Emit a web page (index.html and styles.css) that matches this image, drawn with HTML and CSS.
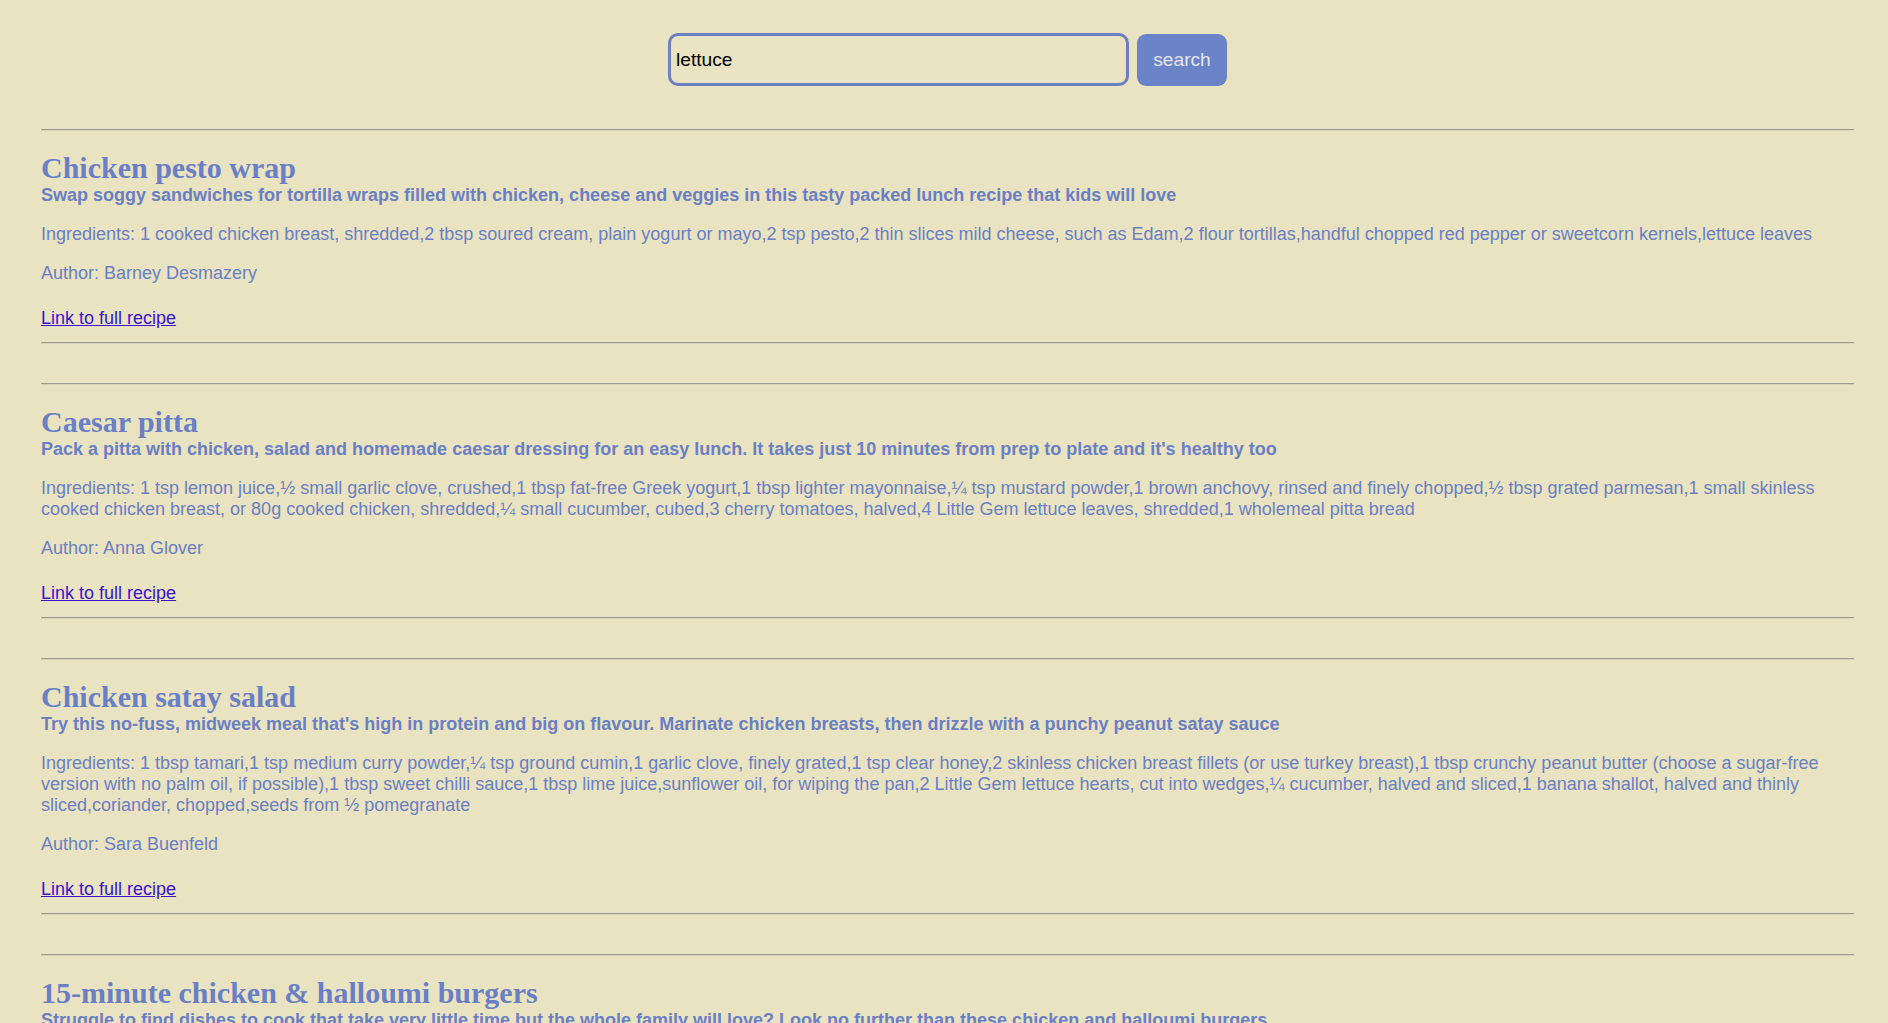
FILE: index.html
```html
<!DOCTYPE html>
<html lang="en">
<head>
<meta charset="utf-8">
<title>Recipe search</title>
<link rel="stylesheet" href="styles.css">
</head>
<body>
<main class="page">
  <form class="search">
    <input class="search-input" type="text" value="lettuce">
    <button class="search-btn" type="button">search</button>
  </form>

  <article class="recipe">
    <hr class="rule">
    <h1 class="recipe-title">Chicken pesto wrap</h1>
    <h3 class="recipe-desc">Swap soggy sandwiches for tortilla wraps filled with chicken, cheese and veggies in this tasty packed lunch recipe that kids will love</h3>
    <p class="recipe-text">Ingredients: 1 cooked chicken breast, shredded,2 tbsp soured cream, plain yogurt or mayo,2 tsp pesto,2 thin slices mild cheese, such as Edam,2 flour tortillas,handful chopped red pepper or sweetcorn kernels,lettuce leaves</p>
    <p class="recipe-text">Author: Barney Desmazery</p>
    <div class="recipe-link-row"><a class="recipe-link" href="#">Link to full recipe</a></div>
    <hr class="rule">
  </article>

  <article class="recipe">
    <hr class="rule">
    <h1 class="recipe-title">Caesar pitta</h1>
    <h3 class="recipe-desc">Pack a pitta with chicken, salad and homemade caesar dressing for an easy lunch. It takes just 10 minutes from prep to plate and it's healthy too</h3>
    <p class="recipe-text">Ingredients: 1 tsp lemon juice,½ small garlic clove, crushed,1 tbsp fat-free Greek yogurt,1 tbsp lighter mayonnaise,¼ tsp mustard powder,1 brown anchovy, rinsed and finely chopped,½ tbsp grated parmesan,1 small skinless cooked chicken breast, or 80g cooked chicken, shredded,¼ small cucumber, cubed,3 cherry tomatoes, halved,4 Little Gem lettuce leaves, shredded,1 wholemeal pitta bread</p>
    <p class="recipe-text">Author: Anna Glover</p>
    <div class="recipe-link-row"><a class="recipe-link" href="#">Link to full recipe</a></div>
    <hr class="rule">
  </article>

  <article class="recipe">
    <hr class="rule">
    <h1 class="recipe-title">Chicken satay salad</h1>
    <h3 class="recipe-desc">Try this no-fuss, midweek meal that's high in protein and big on flavour. Marinate chicken breasts, then drizzle with a punchy peanut satay sauce</h3>
    <p class="recipe-text">Ingredients: 1 tbsp tamari,1 tsp medium curry powder,¼ tsp ground cumin,1 garlic clove, finely grated,1 tsp clear honey,2 skinless chicken breast fillets (or use turkey breast),1 tbsp crunchy peanut butter (choose a sugar-free version with no palm oil, if possible),1 tbsp sweet chilli sauce,1 tbsp lime juice,sunflower oil, for wiping the pan,2 Little Gem lettuce hearts, cut into wedges,¼ cucumber, halved and sliced,1 banana shallot, halved and thinly sliced,coriander, chopped,seeds from ½ pomegranate</p>
    <p class="recipe-text">Author: Sara Buenfeld</p>
    <div class="recipe-link-row"><a class="recipe-link" href="#">Link to full recipe</a></div>
    <hr class="rule">
  </article>

  <article class="recipe">
    <hr class="rule">
    <h1 class="recipe-title">15-minute chicken &amp; halloumi burgers</h1>
    <h3 class="recipe-desc">Struggle to find dishes to cook that take very little time but the whole family will love? Look no further than these chicken and halloumi burgers</h3>
    <p class="recipe-text">Ingredients: 2 chicken breasts,1 tbsp chipotle paste,1 lime, juiced,1 tbsp olive oil,225g halloumi, cut into 8 slices,4 brioche buns,1 large tomato, sliced,1 red onion, finely sliced,1 Little Gem lettuce, leaves separated,sweet chilli sauce, to serve</p>
    <p class="recipe-text">Author: Sophie Godwin</p>
    <div class="recipe-link-row"><a class="recipe-link" href="#">Link to full recipe</a></div>
    <hr class="rule">
  </article>
</main>
</body>
</html>
```

FILE: styles.css
```css
html, body {
  margin: 0;
  padding: 0;
  background: #e9e3c1;
}

body {
  font-family: "Liberation Sans", Arial, sans-serif;
  color: #6a7fc4;
}

.page {
  padding: 0 34px 40px 41px;
}

.search {
  display: flex;
  justify-content: center;
  align-items: center;
  gap: 8px;
  margin: 0;
  padding-top: 33px;
  padding-bottom: 43px;
}

.search-input {
  box-sizing: border-box;
  width: 461px;
  height: 53px;
  padding: 0 5px;
  border: 3px solid #6a80c3;
  border-radius: 10px;
  background: #e9e3c1;
  font-family: "Liberation Sans", Arial, sans-serif;
  font-size: 19.2px;
  color: #000;
  outline: none;
}

.search-btn {
  box-sizing: border-box;
  width: 90px;
  height: 52px;
  border: 0;
  border-radius: 9px;
  background: #6b84c9;
  color: #e4e4e6;
  font-family: "Liberation Sans", Arial, sans-serif;
  font-size: 19.2px;
  padding: 0;
}

.recipe {
  margin-bottom: 39px;
}

.rule {
  margin: 0;
  height: 0;
  border: 0;
  border-top: 1px solid #9b9a93;
  border-bottom: 1px solid #d9d4b6;
}

.recipe-title {
  font-family: "Liberation Serif", "Times New Roman", serif;
  font-weight: bold;
  font-size: 30px;
  margin: 20px 0 0;
  color: #6a7fc4;
}

.recipe-desc {
  font-size: 18px;
  font-weight: bold;
  margin: 0;
  color: #6a7fc4;
}

.recipe-text {
  font-size: 18px;
  margin: 18px 0 0;
}

.recipe-link-row {
  font-size: 18px;
  margin: 24px 0 13px;
}

.recipe-link {
  color: #3a14d0;
}
```
